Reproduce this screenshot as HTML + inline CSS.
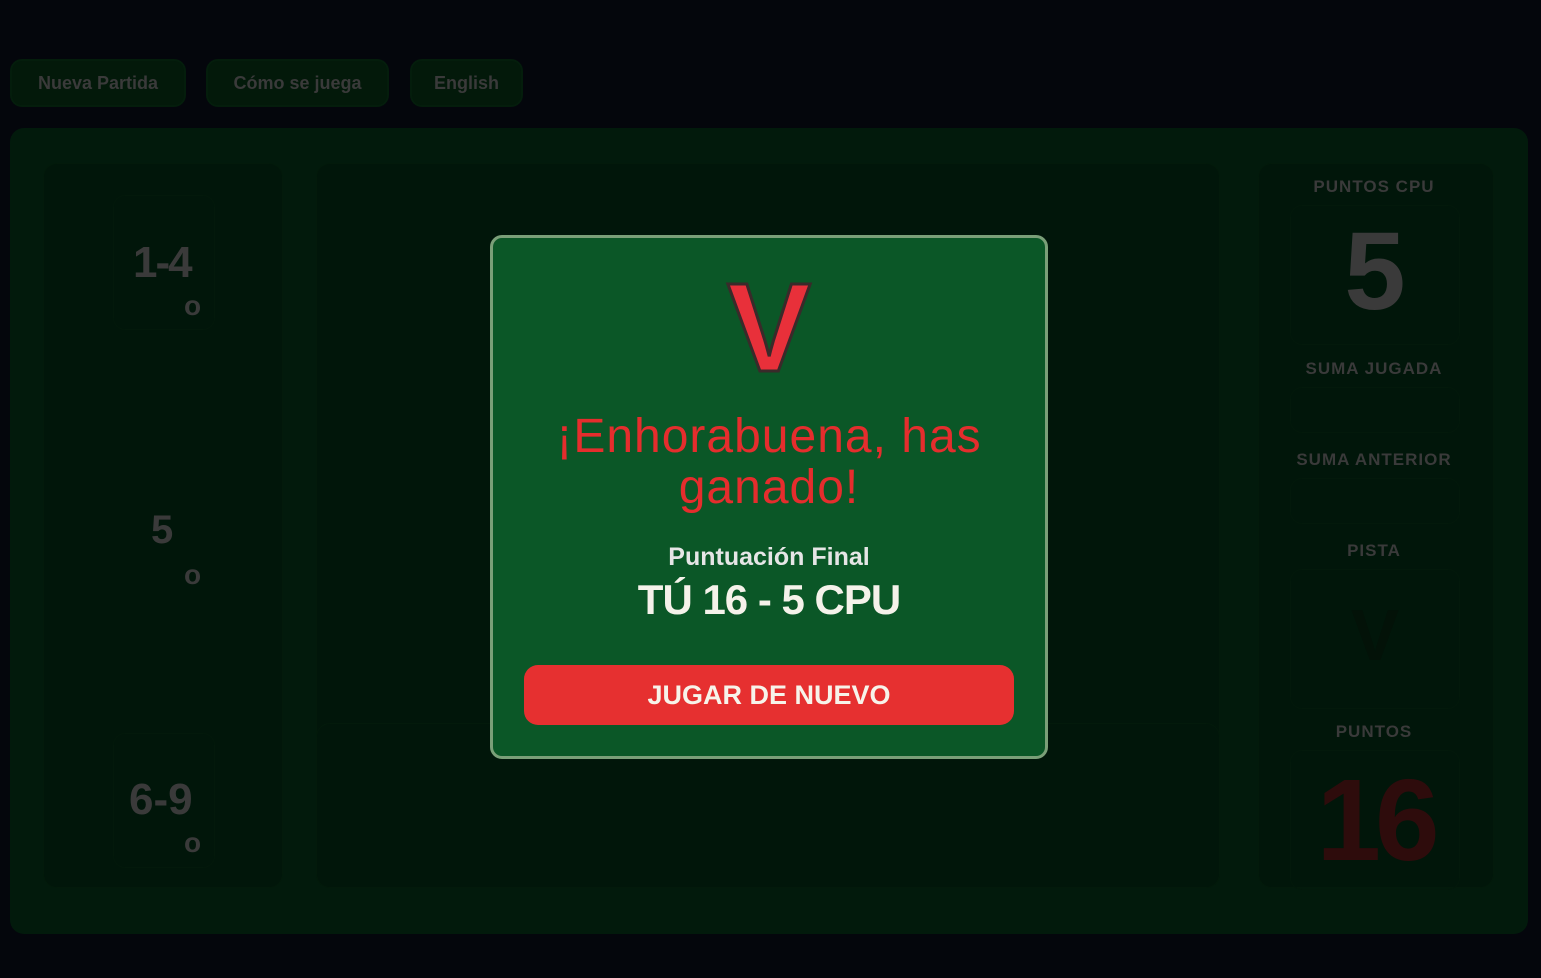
<!DOCTYPE html>
<html><head><meta charset="utf-8"><style>
*{box-sizing:border-box;margin:0;padding:0}
body{width:1541px;height:978px;background:#04060c;font-family:"Liberation Sans",sans-serif;position:relative;overflow:hidden}
.btn{position:absolute;top:59px;height:48px;background:#03190a;border:2px solid #041d0c;border-radius:12px;color:#3a3a3a;font-weight:bold;font-size:18px;line-height:44px;text-align:center}
.main{position:absolute;left:10px;top:128px;width:1518px;height:806px;background:#021a0c;border-radius:14px}
.inner{position:absolute;border:1px solid #031a0b;border-radius:14px;background:#01160a}
.card{position:absolute;border:1px solid #03190b;border-radius:12px}
.big{position:absolute;color:#3a3a3a;font-weight:900;font-family:"Liberation Sans",sans-serif}
.lbl{position:absolute;width:232px;text-align:center;color:#3a3a3a;font-weight:bold;font-size:17px;letter-spacing:1px}
.modal{position:absolute;left:490px;top:235px;width:558px;height:524px;background:#0b5727;border:3px solid #7a9f78;border-radius:12px;text-align:center}
</style></head><body>
<div class="btn" style="left:10px;width:176px">Nueva Partida</div>
<div class="btn" style="left:206px;width:183px">Cómo se juega</div>
<div class="btn" style="left:410px;width:113px">English</div>
<div class="main">
 <div class="inner" style="left:33px;top:35px;width:240px;height:725px"></div>
 <div class="card" style="left:103px;top:67px;width:102px;height:135px"></div>
 <div class="card" style="left:103px;top:605px;width:102px;height:135px"></div>
 <div class="inner" style="left:306px;top:35px;width:904px;height:725px"></div>
 <div class="inner" style="left:306px;top:595px;width:904px;height:165px"></div>
 <div class="inner" style="left:1248px;top:35px;width:236px;height:725px"></div>
</div>
<div class="big" style="left:133px;top:238px;font-size:44px;letter-spacing:-2px">1-4</div>
<div class="big" style="left:184px;top:290px;font-size:28px">o</div>
<div class="big" style="left:151px;top:508px;font-size:40px">5</div>
<div class="big" style="left:184px;top:559px;font-size:28px">o</div>
<div class="big" style="left:129px;top:775px;font-size:44px">6-9</div>
<div class="big" style="left:184px;top:827px;font-size:28px">o</div>
<div class="lbl" style="left:1258px;top:177px">PUNTOS CPU</div>
<div class="card" style="left:1290px;top:205px;width:170px;height:140px"></div>
<div class="big" style="left:1290px;top:212px;width:170px;text-align:center;font-size:110px;line-height:120px">5</div>
<div class="lbl" style="left:1258px;top:359px">SUMA JUGADA</div>
<div class="card" style="left:1290px;top:387px;width:170px;height:46px"></div>
<div class="lbl" style="left:1258px;top:450px">SUMA ANTERIOR</div>
<div class="card" style="left:1290px;top:478px;width:170px;height:46px"></div>
<div class="lbl" style="left:1258px;top:541px">PISTA</div>
<div class="card" style="left:1290px;top:569px;width:170px;height:140px"></div>
<div class="big" style="left:1290px;top:595px;width:170px;text-align:center;font-size:72px;color:#031208">V</div>
<div class="lbl" style="left:1258px;top:722px">PUNTOS</div>
<div class="card" style="left:1290px;top:750px;width:170px;height:140px"></div>
<div class="big" style="left:1290px;top:760px;width:170px;text-align:center;font-size:116px;line-height:120px;color:#2e0c0c;letter-spacing:-6px">16</div>
<div class="modal">
 <div style="position:absolute;left:0;right:0;top:36px;font-size:126px;font-weight:900;color:#e8303a;-webkit-text-stroke:3px #3a2a2a;line-height:108px">V</div>
 <div style="position:absolute;left:10px;right:10px;top:173px;font-size:48px;line-height:51px;color:#e52d2d;letter-spacing:1px">¡Enhorabuena, has ganado!</div>
 <div style="position:absolute;left:0;right:0;top:305px;font-size:25px;font-weight:bold;color:#e6e6e6">Puntuación Final</div>
 <div style="position:absolute;left:0;right:0;top:338px;font-size:42px;font-weight:bold;color:#f5f2ea;letter-spacing:-1px">TÚ 16 - 5 CPU</div>
 <div style="position:absolute;left:31px;top:427px;width:490px;height:60px;background:#e63030;border-radius:14px;color:#f7f3ea;font-size:27px;font-weight:900;line-height:60px">JUGAR DE NUEVO</div>
</div>
</body></html>
